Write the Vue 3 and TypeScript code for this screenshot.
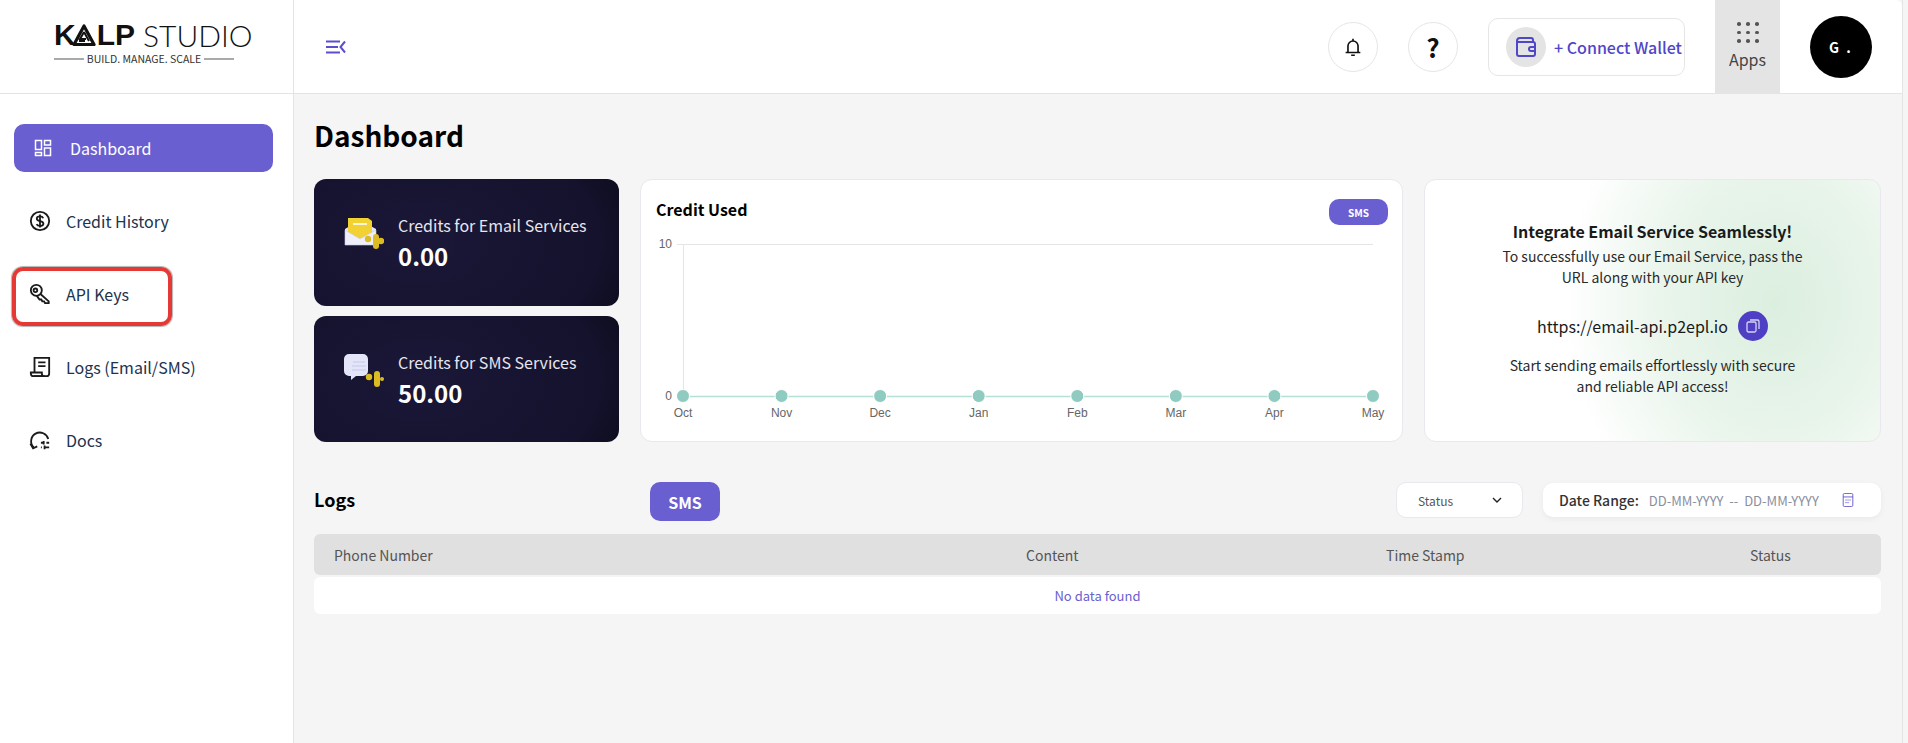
<template>
  <div class="app">
    <div class="shell">
      <aside class="sidebar">
        <div class="brand">
          <div class="logo">
            <div class="logo-name">
              <span class="logo-bold">K</span>
              <svg class="logo-mark" viewBox="0 0 24 23" width="24" height="23">
                <path d="M12 2 L22 20.5 H2 Z" fill="none" stroke="#111" stroke-width="3.2" stroke-linejoin="round" />
                <path d="M12 8 L17 17 M12 8 L8 15 H14 M7 17 H13" fill="none" stroke="#111" stroke-width="2" />
              </svg>
              <span class="logo-bold">LP</span>
              <span class="logo-light">STUDIO</span>
            </div>
            <div class="logo-tag"><i></i><span>BUILD. MANAGE. SCALE</span><i></i></div>
          </div>
        </div>
        <nav class="nav">
          <a v-for="item in navItems" :key="item.label" class="nav-item" :class="{ active: item.active }">
            <svg class="nav-icon" viewBox="0 0 24 24" fill="none" stroke="currentColor" stroke-width="2">
              <path v-for="d in item.paths" :key="d" :d="d" />
            </svg>
            <span>{{ item.label }}</span>
          </a>
        </nav>
        <div class="highlight"></div>
      </aside>

      <div class="column">
        <header class="topbar">
          <svg class="menu-icon" viewBox="0 0 20 14" width="20" height="14" fill="none" stroke="#5b4fcf" stroke-width="2">
            <path d="M0 1.5h14M0 7h12M0 12.5h14M19 1.5 14.5 7l4.5 5.5" />
          </svg>
          <div class="topbar-right">
            <button class="round-btn">
              <svg viewBox="0 0 24 24" width="22" height="22" fill="none" stroke="#111" stroke-width="1.8">
                <path d="M12 3v2M6.5 18V11a5.5 5.5 0 0 1 11 0v7M4 18h16M10 21h4" />
              </svg>
            </button>
            <button class="round-btn help">?</button>
            <button class="wallet-btn">
              <span class="wallet-icon">
                <svg viewBox="0 0 24 24" width="24" height="24" fill="none" stroke="#4f46c8" stroke-width="2">
                  <path d="M19 7V5a2 2 0 0 0-2-2H6a3 3 0 0 0-3 3v13a2 2 0 0 0 2 2h14a2 2 0 0 0 2-2V9a2 2 0 0 0-2-2H3" />
                  <path d="M21 12h-4a2 2 0 0 0 0 4h4" />
                </svg>
              </span>
              <span>+ Connect Wallet</span>
            </button>
            <div class="apps">
              <div class="apps-dots"><i v-for="n in 9" :key="n"></i></div>
              <span>Apps</span>
            </div>
            <div class="avatar">G .</div>
          </div>
        </header>

        <main class="main">
          <h1>Dashboard</h1>
          <section class="top-grid">
            <div class="credits">
              <div class="credit-card">
                <svg class="credit-icon" viewBox="0 0 40 36" width="40" height="36">
                  <path d="M1 12 16 3l16 9v15H1z" fill="#e4e5f6" />
                  <path d="M4 1h20l4 3v12l-12 6-12-6z" fill="#f1d232" />
                  <path d="M9 7h14" stroke="#fff" stroke-width="1.6" />
                  <path d="M1 13 16 22l16-9v15H1z" fill="#eeeffa" stroke="#c9cbe6" stroke-width=".6" />
                  <circle cx="24" cy="22" r="3.2" fill="#dcbc22" />
                  <rect x="29" y="17" width="6" height="15" rx="3" fill="#dcbc22" />
                  <circle cx="37" cy="24" r="3.2" fill="#dcbc22" />
                </svg>
                <div>
                  <div class="credit-label">Credits for Email Services</div>
                  <div class="credit-value">0.00</div>
                </div>
              </div>
              <div class="credit-card">
                <svg class="credit-icon" viewBox="0 0 40 36" width="40" height="36">
                  <path d="M5 0h14a5 5 0 0 1 5 5v12a5 5 0 0 1-5 5H12l-5 4 0-4H5a5 5 0 0 1-5-5V5a5 5 0 0 1 5-5z" fill="#e4e5f8" />
                  <path d="M9 8h12M8 12h14M8 16h14" stroke="#c6c8e6" stroke-width="1" />
                  <circle cx="25" cy="23" r="3.2" fill="#dcbc22" />
                  <rect x="30" y="17" width="6" height="16" rx="3" fill="#dcbc22" />
                  <circle cx="38" cy="25" r="2" fill="#dcbc22" />
                </svg>
                <div>
                  <div class="credit-label">Credits for SMS Services</div>
                  <div class="credit-value">50.00</div>
                </div>
              </div>
            </div>

            <div class="chart-card">
              <div class="chart-head">
                <h3>Credit Used</h3>
                <span class="pill">SMS</span>
              </div>
              <svg class="chart" viewBox="0 0 761 195" width="761" height="195">
                <line x1="36" x2="732" y1="12.5" y2="12.5" stroke="#e5e5e5" />
                <line x1="42.5" x2="42.5" y1="12" y2="164" stroke="#e5e5e5" />
                <line x1="36" x2="42" y1="164.5" y2="164.5" stroke="#e5e5e5" />
                <text x="31" y="16" text-anchor="end">10</text>
                <text x="31" y="168" text-anchor="end">0</text>
                <line x1="42" x2="732" y1="164.5" y2="164.5" stroke="#b4e0d8" stroke-width="1.5" />
                <g v-for="(m, i) in months" :key="m">
                  <circle :cx="pointX(i)" cy="164" r="6.5" fill="#8fcbc0" stroke="#fff" stroke-width="1" />
                  <text :x="pointX(i)" y="185" text-anchor="middle">{{ m }}</text>
                </g>
              </svg>
            </div>

            <div class="info-card">
              <h3>Integrate Email Service Seamlessly!</h3>
              <p>To successfully use our Email Service, pass the<br />URL along with your API key</p>
              <div class="url-row">
                <span>https://email-api.p2epl.io</span>
                <button class="copy-btn">
                  <svg viewBox="0 0 14 14" width="14" height="14" fill="none" stroke="#d8d4f8" stroke-width="1.3">
                    <rect x="1" y="3" width="9" height="10" rx="1.5" />
                    <path d="M4 1h7.5A1.5 1.5 0 0 1 13 2.500V10" />
                  </svg>
                </button>
              </div>
              <p>Start sending emails effortlessly with secure<br />and reliable API access!</p>
            </div>
          </section>

          <section class="logs-bar">
            <h2>Logs</h2>
            <button class="sms-btn">SMS</button>
            <div class="filters">
              <div class="status-select">
                <span>Status</span>
                <svg viewBox="0 0 10 6" width="10" height="6" fill="none" stroke="#222" stroke-width="1.400">
                  <path d="M1 1l4 4 4-4" />
                </svg>
              </div>
              <div class="date-range">
                <strong>Date Range:</strong>
                <span>DD-MM-YYYY&nbsp; --&nbsp; DD-MM-YYYY</span>
                <svg viewBox="0 0 12 16" width="12" height="14" fill="none" stroke="#5b4fcf" stroke-width="1">
                  <rect x=".5" y=".5" width="11" height="15" rx="1.500" />
                  <path d="M.5 4.500h11M3 8h1.500M5.300 8h1.500M7.600 8h1.500M3 11h1.500M5.300 11h1.500" />
                </svg>
              </div>
            </div>
          </section>

          <section class="table">
            <div class="table-head">
              <span v-for="col in columns" :key="col">{{ col }}</span>
            </div>
            <div class="table-empty">No data found</div>
          </section>
        </main>
      </div>
    </div>
  </div>
</template>

<script setup lang="ts">
interface NavItem {
  label: string
  paths: string[]
  active?: boolean
}

const navItems: NavItem[] = [
  {
    label: 'Dashboard',
    active: true,
    paths: ['M2 2h8v12H2z', 'M14 2h8v6h-8z', 'M2 18h8v4H2z', 'M14 12h8v10h-8z']
  },
  {
    label: 'Credit History',
    paths: [
      'M12 2a10 10 0 1 0 0 20 10 10 0 0 0 0-20z',
      'M15.500 9c-.5-1.300-1.800-2-3.500-2-2 0-3.500 1-3.500 2.600 0 3.600 7.200 1.700 7.200 5.300 0 1.500-1.600 2.400-3.700 2.400-1.700 0-3.100-.7-3.700-2',
      'M12 5v14'
    ]
  },
  {
    label: 'API Keys',
    paths: [
      'M8 2a6 6 0 1 0 0 12 6 6 0 0 0 0-12z',
      'M7 6a2 2 0 1 0 0 4 2 2 0 0 0 0-4z',
      'M12.500 12l9 8v2h-4l-1-2h-2l-1-2h-2l-3-4'
    ]
  },
  {
    label: 'Logs (Email/SMS)',
    paths: [
      'M6 18V2h16v17a3 3 0 0 1-3 3H5',
      'M2 18h12v1a3 3 0 0 0 3 3H5a3 3 0 0 1-3-3z',
      'M10 7h8M10 11h8'
    ]
  },
  {
    label: 'Docs',
    paths: [
      'M5 20A9.500 9.500 0 1 1 21 11',
      'M1.500 16l3 5 4.500-2',
      'M13 15h3M19 15h3M13 20h1M17 20h5',
      'M16 13v4M17 18v4'
    ]
  }
]

const months = ['Oct', 'Nov', 'Dec', 'Jan', 'Feb', 'Mar', 'Apr', 'May']
const columns = ['Phone Number', 'Content', 'Time Stamp', 'Status']

// chart.js spacing of the reference points
const pointX = (i: number) => 42 + i * 98.57
</script>

<style>
html,
body {
  margin: 0;
  background: #f5f5f5;
}
</style>

<style scoped>
* {
  box-sizing: border-box;
}
.app {
  height: 100vh;
  overflow: hidden;
  background: #f5f5f5;
  font-family: "Noto Sans CJK SC", "Noto Sans", sans-serif;
  color: #111;
}
.shell {
  display: flex;
  height: 100%;
  width: 1903px;
  border-right: 1px solid #e4e4e4;
}
.sidebar {
  position: relative;
  width: 294px;
  flex: none;
  background: #fff;
  border-right: 1px solid #e4e4e4;
}
.brand {
  height: 94px;
  border-bottom: 1px solid #e4e4e4;
  padding: 22px 0 0 54px;
}
.logo {
  width: 180px;
}
.logo-name {
  display: flex;
  align-items: center;
  height: 26px;
  color: #111;
}
.logo-bold {
  font-family: "Liberation Sans", sans-serif;
  font-weight: 700;
  font-size: 30px;
  line-height: 26px;
  display: inline-block;
  transform-origin: left center;
}
.logo-mark {
  flex: none;
  margin: 0 1px 0 -4px;
}
.logo-light {
  font-family: Lato, sans-serif;
  font-weight: 300;
  font-size: 30px;
  line-height: 26px;
  margin-left: 8px;
}
.logo-tag {
  display: flex;
  align-items: center;
  justify-content: space-between;
  margin-top: 4px;
  font-size: 10.5px;
  line-height: 14px;
  color: #333;
}
.logo-tag i {
  flex: 1;
  height: 2px;
  background: #aaa;
}
.logo-tag span {
  padding: 0 3px;
  white-space: nowrap;
}
.nav {
  display: flex;
  flex-direction: column;
  gap: 25px;
  padding: 30px 20px 0 14px;
}
.nav-item {
  display: flex;
  align-items: center;
  gap: 15px;
  height: 48px;
  padding-left: 15px;
  border-radius: 10px;
  font-size: 16px;
  color: #22324d;
}
.nav-icon {
  width: 22px;
  height: 22px;
  color: #1a1a1a;
  flex: none;
}
.nav-item.active {
  background: #6a5fd0;
  color: #fff;
  gap: 18px;
  padding-left: 20px;
}
.nav-item.active .nav-icon {
  width: 18px;
  height: 18px;
  color: #fff;
}
.highlight {
  position: absolute;
  left: 12px;
  top: 267px;
  width: 160px;
  height: 59px;
  border: 4px solid #e53935;
  border-radius: 11px;
  box-shadow: 0 0 1px 1px rgba(0, 0, 0, 0.3);
}
.column {
  flex: 1;
  min-width: 0;
}
.topbar {
  display: flex;
  align-items: center;
  height: 94px;
  padding-left: 32px;
  background: #fff;
  border-bottom: 1px solid #e4e4e4;
  border-top-right-radius: 6px;
}
.topbar-right {
  display: flex;
  align-items: center;
  height: 100%;
  margin-left: auto;
}
.round-btn {
  display: flex;
  align-items: center;
  justify-content: center;
  width: 50px;
  height: 50px;
  margin-right: 30px;
  padding: 0;
  background: #fff;
  border: 1px solid #e6e6e6;
  border-radius: 50%;
}
.help {
  font-family: inherit;
  font-size: 26px;
  font-weight: 700;
  color: #111;
}
.wallet-btn {
  display: flex;
  align-items: center;
  gap: 8px;
  width: 197px;
  height: 58px;
  padding: 0 0 0 17px;
  margin-right: 30px;
  background: #fff;
  border: 1px solid #e6e6e6;
  border-radius: 10px;
  font-family: inherit;
  font-size: 16px;
  font-weight: 500;
  color: #4f46c8;
  white-space: nowrap;
}
.wallet-icon {
  display: flex;
  align-items: center;
  justify-content: center;
  width: 40px;
  height: 40px;
  border-radius: 50%;
  background: #e4e4e4;
}
.apps {
  display: flex;
  flex-direction: column;
  align-items: center;
  width: 65px;
  height: 100%;
  padding-top: 22px;
  background: #e4e4e4;
  font-size: 16px;
  line-height: 24px;
  color: #444;
}
.apps-dots {
  display: grid;
  grid-template-columns: repeat(3, 3px);
  gap: 5px 6px;
  margin-bottom: 4px;
}
.apps-dots i {
  width: 3.500px;
  height: 3.500px;
  border-radius: 50%;
  background: #555;
}
.avatar {
  display: flex;
  align-items: center;
  justify-content: center;
  width: 62px;
  height: 62px;
  margin: 0 30px 0 30px;
  border-radius: 50%;
  background: #000;
  color: #fff;
  font-size: 14px;
  font-weight: 700;
  letter-spacing: 2px;
}
.main {
  padding: 20px 21px 0 20px;
}
h1 {
  margin: 0 0 23px;
  font-size: 28px;
  line-height: 42px;
  font-weight: 700;
  color: #000;
}
.top-grid {
  display: grid;
  grid-template-columns: 305px 1fr 457px;
  gap: 21px;
  height: 263px;
}
.credits {
  display: flex;
  flex-direction: column;
  gap: 10px;
}
.credit-card {
  flex: 1;
  display: flex;
  align-items: center;
  gap: 4px;
  padding-left: 30px;
  border-radius: 12px;
  background: radial-gradient(ellipse 300px 200px at 35% 50%, #1b1738 0%, #14122c 60%, #000 105%);
  color: #fff;
}
.credit-icon {
  flex: none;
  margin: -14px 10px 0 0;
}
.credit-label {
  font-size: 16px;
  line-height: 24px;
  color: #e6e6ee;
}
.credit-value {
  margin-top: 4px;
  font-size: 24px;
  line-height: 30px;
  font-weight: 700;
}
.chart-card,
.info-card {
  background: #fff;
  border: 1px solid #e8e8ee;
  border-radius: 12px;
}
.chart-head {
  display: flex;
  justify-content: space-between;
  align-items: flex-start;
  height: 52px;
  padding: 19px 14px 0 15px;
}
.chart-head h3 {
  margin: 0;
  font-size: 16px;
  line-height: 20px;
  font-weight: 700;
  color: #000;
}
.pill {
  display: flex;
  align-items: center;
  justify-content: center;
  width: 59px;
  height: 26px;
  border-radius: 10px;
  background: #6a5fd0;
  color: #fff;
  font-size: 10px;
  font-weight: 700;
}
.chart {
  display: block;
}
.chart text {
  font-family: "Liberation Sans", Arial, sans-serif;
  font-size: 12px;
  fill: #666;
}
.info-card {
  display: flex;
  flex-direction: column;
  align-items: center;
  padding-top: 40px;
  text-align: center;
  background: radial-gradient(ellipse 210px 260px at 77% 47%, #dbefdf 0%, #eaf5ec 55%, #fff 100%) #fff;
}
.info-card h3 {
  margin: 0 0 4px;
  font-size: 16px;
  line-height: 22px;
  font-weight: 700;
  color: #1a1a1a;
}
.info-card p {
  margin: 0;
  font-size: 14px;
  line-height: 21px;
  color: #2a2a2a;
}
.url-row {
  display: flex;
  align-items: center;
  gap: 10px;
  height: 30px;
  margin: 23px 0 14px;
  font-size: 16px;
  color: #1a1a1a;
}
.copy-btn {
  display: flex;
  align-items: center;
  justify-content: center;
  width: 30px;
  height: 30px;
  padding: 0;
  border: 0;
  border-radius: 50%;
  background: #4f3fc4;
}
.logs-bar {
  display: flex;
  align-items: flex-start;
  margin-top: 40px;
  height: 39px;
}
.logs-bar h2 {
  width: 336px;
  margin: 0;
  font-size: 18px;
  line-height: 34px;
  font-weight: 700;
  color: #000;
}
.sms-btn {
  width: 70px;
  height: 39px;
  padding: 0;
  border: 0;
  border-radius: 10px;
  background: #6a5fd0;
  color: #fff;
  font-family: inherit;
  font-size: 16px;
  font-weight: 700;
}
.filters {
  display: flex;
  gap: 20px;
  margin-left: auto;
}
.status-select {
  display: flex;
  align-items: center;
  justify-content: space-between;
  width: 127px;
  height: 36px;
  padding: 0 20px 0 21px;
  background: #fff;
  border: 1px solid #e8e8ee;
  border-radius: 10px;
  font-size: 12px;
  color: #555;
}
.date-range {
  display: flex;
  align-items: center;
  width: 338px;
  height: 34px;
  margin-top: 1px;
  padding: 0 27px 0 16px;
  background: #fff;
  border-radius: 10px;
  box-shadow: 0 2px 6px rgba(0, 0, 0, 0.05);
  font-size: 13px;
  color: #8a8fa0;
  white-space: nowrap;
}
.date-range strong {
  margin-right: 10px;
  font-size: 14px;
  font-weight: 500;
  color: #333;
}
.date-range svg {
  margin-left: auto;
}
.table {
  margin-top: 13px;
}
.table-head {
  display: grid;
  grid-template-columns: 692px 360px 364px 1fr;
  align-items: center;
  height: 41px;
  padding-left: 20px;
  border-radius: 6px;
  background: #e0e0e0;
  font-size: 14px;
  color: #555;
}
.table-head span:first-child {
  margin-right: 20px;
}
.table-empty {
  height: 37px;
  margin-top: 2px;
  border-radius: 6px;
  background: #fff;
  font-size: 13px;
  line-height: 37px;
  text-align: center;
  color: #6a5fd0;
}
</style>
